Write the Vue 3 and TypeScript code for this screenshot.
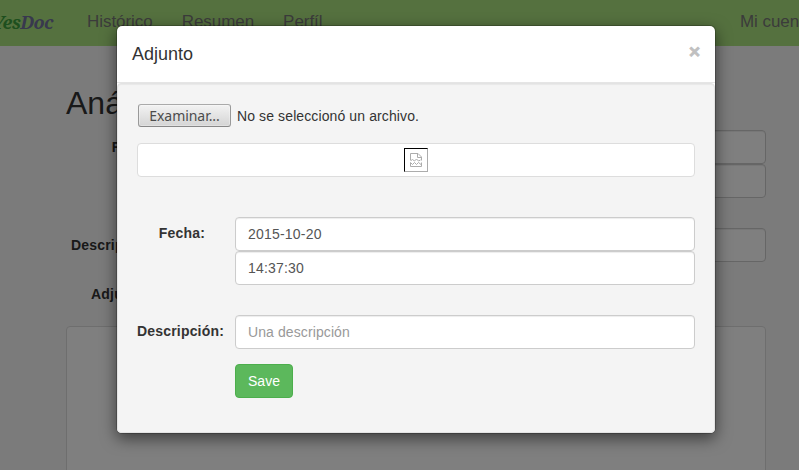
<script setup lang="ts">
import { ref } from 'vue'

const links: string[] = ['Histórico', 'Resumen', 'Perfíl']
const date = ref('2015-10-20')
const time = ref('14:37:30')
const description = ref('')
const open = ref(true)
</script>

<template>
  <div class="screen">
    <nav class="navbar">
      <a class="brand"><span class="yes">Yes</span><span class="doc">Doc</span></a>
      <a v-for="link in links" :key="link" class="link">{{ link }}</a>
      <a class="link account">Mi cuenta</a>
    </nav>
    <main class="page">
      <h1>Análisis</h1>
      <div class="row dates">
        <label>Fecha:</label>
        <div class="fields"><div class="control"></div><div class="control"></div></div>
      </div>
      <div class="row desc">
        <label>Descripción:</label>
        <div class="fields"><div class="control"></div></div>
      </div>
      <div class="row files"><label>Adjuntos:</label></div>
      <div class="panel"></div>
    </main>

    <div v-if="open" class="backdrop">
      <section class="modal" role="dialog">
        <header class="head">
          <h4>Adjunto</h4>
          <button class="close" type="button" @click="open = false">×</button>
        </header>
        <form class="well" @submit.prevent>
          <div class="file">
            <button class="browse" type="button">Examinar...</button>
            <span>No se seleccionó un archivo.</span>
          </div>
          <div class="preview">
            <div class="frame">
              <svg width="12" height="14" viewBox="0 0 12 14" fill="none" stroke="#acacac">
                <path d="M.5 7.500V.5H8L11.5 4V7.500M7.500 1v3.500H11" />
                <path d="M.5 9.500v4h11v-4" />
                <path d="M1 7.500L2.500 6.500L4.500 8L6.500 6L8.500 8L10.500 7M.5 9.500L2.500 11.500L4.500 9.500L6.500 11.500L8.500 9.500L11 11.500" />
              </svg>
            </div>
          </div>
          <div class="group when">
            <label>Fecha:</label>
            <div class="stack">
              <input v-model="date" class="control" type="text">
              <input v-model="time" class="control" type="text">
            </div>
          </div>
          <div class="group">
            <label>Descripción:</label>
            <div class="stack">
              <input v-model="description" class="control" type="text" placeholder="Una descripción">
              <button class="save" type="submit">Save</button>
            </div>
          </div>
        </form>
      </section>
    </div>
  </div>
</template>

<style>
body { overflow: hidden; }
</style>

<style scoped>
* { box-sizing: border-box; }
.screen {
  position: relative;
  width: 799px;
  height: 470px;
  overflow: hidden;
  background: #f7f7f7;
  color: #333;
  font: 14px/20px "Liberation Sans", Arial, sans-serif;
}
.navbar {
  display: flex;
  height: 46px;
  padding-top: 12px;
  background: #abe37e;
  white-space: nowrap;
}
.brand {
  width: 95px;
  margin-left: -8px;
  font: italic bold 18px/20px "Noto Serif", "DejaVu Serif Condensed", "DejaVu Serif", serif;
  letter-spacing: -.6px;
}
.yes { color: #3c9e3c; }
.doc { color: #70709c; }
.link {
  margin-right: 29px;
  color: #777;
  font-size: 17px;
  line-height: 20px;
  letter-spacing: -.05px;
}
.account { width: 59px; margin: 0 0 0 auto; }
.page { width: 700px; margin-left: 66px; }
h1 { margin: 0; padding-top: 40px; height: 84px; font-size: 32px; line-height: 35px; font-weight: 400; }
.row { display: flex; gap: 30px; }
label { font-weight: 700; text-align: right; letter-spacing: .18px; white-space: nowrap; }
.row label { width: 92px; padding-top: 7px; }
.fields { flex: 1; }
.dates { height: 98px; }
.desc { height: 49px; }
.files { height: 49px; }
.control {
  display: block;
  width: 100%;
  height: 34px;
  padding: 6px 12px;
  border: 1px solid #ccc;
  border-radius: 4px;
  background: #fff;
  box-shadow: inset 0 1px 1px rgba(0, 0, 0, .075);
  color: #555;
  font: 14px/20px "Liberation Sans", Arial, sans-serif;
  letter-spacing: .2px;
}
.control::placeholder { color: #999; opacity: 1; letter-spacing: .1px; }
.panel { height: 200px; border: 1px solid #ddd; border-radius: 4px; background: #fff; }
.backdrop {
  position: absolute;
  inset: 0;
  padding: 25px 0 0 116px;
  background: rgba(0, 0, 0, .5);
}
.modal {
  width: 600px;
  height: 409px;
  border: 1px solid rgba(0, 0, 0, .2);
  border-radius: 6px;
  background: #fff;
  background-clip: padding-box;
  box-shadow: 0 5px 15px rgba(0, 0, 0, .5);
}
.head {
  display: flex;
  justify-content: space-between;
  height: 57px;
  padding: 15px;
  border-bottom: 1px solid #e5e5e5;
}
h4 { margin: 0; font-size: 18px; line-height: 26px; font-weight: 400; }
.close {
  height: 21px;
  padding: 0;
  border: 0;
  background: none;
  color: #c0c0c0;
  font: bold 19px/21px "Liberation Sans", Arial, sans-serif;
  -webkit-text-stroke: .8px #c0c0c0;
}
.well {
  height: 350px;
  padding: 19px;
  border: 1px solid #e3e3e3;
  border-radius: 4px;
  background: #f4f4f4;
  box-shadow: inset 0 1px 1px rgba(0, 0, 0, .05);
}
.file { display: flex; align-items: center; gap: 6px; height: 26px; padding-left: 1px; letter-spacing: .11px; }
.browse {
  width: 93px;
  height: 23px;
  margin-top: -1px;
  padding: 0;
  border: 1px solid #999;
  border-color: #aaa #999 #888;
  border-radius: 3px;
  background: linear-gradient(#f3f3f3, #d4d4d4);
  box-shadow: inset 0 0 0 1px rgba(255, 255, 255, .3);
  color: #4c4c4c;
  font: 14px/20px "Noto Sans", sans-serif;
  letter-spacing: -.05px;
}
.preview {
  display: flex;
  justify-content: center;
  align-items: center;
  height: 34px;
  margin: 14px 0 40px;
  border: 1px solid #ddd;
  border-radius: 4px;
  background: #fff;
}
.frame {
  display: flex;
  align-items: center;
  justify-content: center;
  width: 24px;
  height: 24px;
  border: 1px solid;
  border-color: #000 #acacac #acacac #000;
}
.group { display: flex; }
.group label { width: 87px; margin-right: 11px; padding-top: 6px; }
.when { height: 98px; }
.when label { width: 68px; margin-right: 30px; }
.stack { flex: 1; }
.save {
  display: block;
  width: 58px;
  height: 34px;
  margin-top: 15px;
  padding: 0;
  border: 1px solid #4cae4c;
  border-radius: 4px;
  background: #5cb85c;
  color: #fff;
  font: 14px/20px "Liberation Sans", Arial, sans-serif;
}
</style>
